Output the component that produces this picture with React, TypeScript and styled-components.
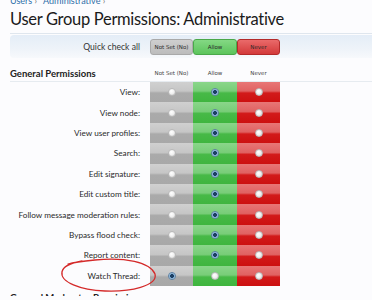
import React from "react";
import styled, { createGlobalStyle, css } from "styled-components";

const GlobalStyle = createGlobalStyle`
  html, body {
    margin: 0;
    padding: 0;
    background: #fcfcfe;
    overflow: hidden;
  }
  body {
    font-family: "Open Sans", "DejaVu Sans", sans-serif;
    color: #222;
  }
`;

const Page = styled.div`
  position: relative;
  width: 440px;
  height: 300px;
  margin-top: -4px;
  padding-left: 10px;
  box-sizing: border-box;
`;

const Breadcrumb = styled.div`
  display: flex;
  gap: 6px;
  height: 10px;
  font-family: "Lato", sans-serif;
  font-size: 9px;
  line-height: 10px;
  color: #2d6ea8;
`;

const Crumb = styled.span`
  &::after {
    content: " ›";
    color: #777;
  }
`;

const Title = styled.h1`
  margin: 0;
  padding: 3px 0 4px;
  font-family: "Lato", sans-serif;
  font-weight: 400;
  font-size: 16.5px;
  line-height: 20px;
  letter-spacing: -0.3px;
  color: #1a1a1a;
  border-bottom: 1px solid #dfe6ee;
`;

const COLS = "130px 10px 43px 44px 43px";

const QuickBar = styled.div`
  margin-top: 1px;
  height: 23px;
  display: grid;
  grid-template-columns: ${COLS};
  align-items: center;
  border-radius: 4px 0 0 4px;
  background: linear-gradient(to bottom, #e4edf7 0%, #eef3f9 60%, #f7f9fc 100%);
`;

const QuickLabel = styled.div`
  grid-column: 1;
  text-align: right;
  font-family: "Lato", sans-serif;
  font-size: 8.6px;
  color: #333;
  white-space: nowrap;
`;

type Kind = "none" | "allow" | "never";

const btnBg: Record<Kind, string> = {
  none: "linear-gradient(to bottom, #cfcfcf 0%, #bcbcbc 100%)",
  allow: "linear-gradient(to bottom, #84d884 0%, #5cc45c 100%)",
  never: "linear-gradient(to bottom, #ea6a6a 0%, #d33a3a 100%)",
};

const btnBorder: Record<Kind, string> = {
  none: "#a9a9a9",
  allow: "#4aa84a",
  never: "#b32a2a",
};

const QuickButton = styled.div<{ $kind: Kind }>`
  height: 16px;
  box-sizing: border-box;
  display: flex;
  align-items: center;
  justify-content: center;
  border: 1px solid ${(p) => btnBorder[p.$kind]};
  border-radius: 3px;
  background: ${(p) => btnBg[p.$kind]};
  font-family: "DejaVu Sans", sans-serif;
  font-size: 5.5px;
  color: #2a2a2a;
  white-space: nowrap;
`;

const SectionHead = styled.div`
  margin-top: 7px;
  height: 16px;
  display: grid;
  grid-template-columns: ${COLS};
  align-items: center;
  border-bottom: 1px solid #e6ebf0;
`;

const SectionTitle = styled.div`
  grid-column: 1 / span 2;
  font-family: "Lato", sans-serif;
  font-weight: 700;
  font-size: 9.5px;
  color: #222;
`;

const ColLabel = styled.div`
  text-align: center;
  font-family: "DejaVu Sans", sans-serif;
  font-size: 5.5px;
  color: #444;
  white-space: nowrap;
`;

const Row = styled.div`
  height: 20.4px;
  display: grid;
  grid-template-columns: ${COLS};
  align-items: stretch;
`;

const RowLabel = styled.div`
  grid-column: 1;
  display: flex;
  align-items: center;
  justify-content: flex-end;
  font-family: "Lato", sans-serif;
  font-size: 8.2px;
  color: #2a2a2a;
  white-space: nowrap;
`;

const cellBg: Record<Kind, string> = {
  none: "linear-gradient(to bottom, #d0d0d0 0%, #c6c6c6 45%, #aaaaaa 55%, #a8a8a8 100%)",
  allow: "linear-gradient(to bottom, #8ad68a 0%, #78cd78 45%, #47b947 55%, #3fb53f 100%)",
  never: "linear-gradient(to bottom, #e87676 0%, #e06262 45%, #d21a1a 55%, #cc1010 100%)",
};

const Cell = styled.div<{ $kind: Kind }>`
  display: flex;
  align-items: center;
  justify-content: center;
  background: ${(p) => cellBg[p.$kind]};
`;

const Radio = styled.span<{ $on: boolean }>`
  width: 8px;
  height: 8px;
  border-radius: 50%;
  box-sizing: border-box;
  ${(p) =>
    p.$on
      ? css`
          background: radial-gradient(circle at 50% 50%, #1d3f63 0%, #1d3f63 38%, #6fa3d0 50%, #d9e7f3 80%);
          border: 1px solid #5a7fa3;
        `
      : css`
          background: radial-gradient(circle at 40% 35%, #ffffff 0%, #f0f0f0 50%, #cfcfcf 100%);
          border: 1px solid #b9b9b9;
        `}
`;

const NextSection = styled.div`
  margin-top: 6px;
  font-family: "Lato", sans-serif;
  font-weight: 700;
  font-size: 9.5px;
  color: #222;
`;

const Scribble = styled.svg`
  position: absolute;
  left: 0;
  top: 4px;
  width: 372px;
  height: 300px;
  pointer-events: none;
`;

const rows: { label: string; value: Kind }[] = [
  { label: "View:", value: "allow" },
  { label: "View node:", value: "allow" },
  { label: "View user profiles:", value: "allow" },
  { label: "Search:", value: "allow" },
  { label: "Edit signature:", value: "allow" },
  { label: "Edit custom title:", value: "allow" },
  { label: "Follow message moderation rules:", value: "allow" },
  { label: "Bypass flood check:", value: "allow" },
  { label: "Report content:", value: "allow" },
  { label: "Watch Thread:", value: "none" },
];

const kinds: Kind[] = ["none", "allow", "never"];

export default function App() {
  return (
    <>
      <GlobalStyle />
      <Page>
        <Breadcrumb>
          <Crumb>Users</Crumb>
          <Crumb>Administrative</Crumb>
        </Breadcrumb>
        <Title>User Group Permissions: Administrative</Title>
        <QuickBar>
          <QuickLabel>Quick check all</QuickLabel>
          <span />
          <QuickButton $kind="none">Not Set (No)</QuickButton>
          <QuickButton $kind="allow">Allow</QuickButton>
          <QuickButton $kind="never">Never</QuickButton>
        </QuickBar>
        <SectionHead>
          <SectionTitle>General Permissions</SectionTitle>
          <ColLabel>Not Set (No)</ColLabel>
          <ColLabel>Allow</ColLabel>
          <ColLabel>Never</ColLabel>
        </SectionHead>
        {rows.map((r) => (
          <Row key={r.label}>
            <RowLabel>{r.label}</RowLabel>
            <span />
            {kinds.map((k) => (
              <Cell key={k} $kind={k}>
                <Radio $on={r.value === k} />
              </Cell>
            ))}
          </Row>
        ))}
        <NextSection>General Moderator Permissions</NextSection>
        <Scribble viewBox="0 0 372 300">
          <path
            d="M 68 264 C 75 262, 85 261, 95 260 C 125 257, 150 262, 155 274 C 158 286, 130 292, 105 291 C 80 290, 60 282, 62 272 C 63 266, 70 263, 82 261"
            fill="none"
            stroke="#d42a2a"
            strokeWidth="1.3"
            strokeLinecap="round"
          />
        </Scribble>
      </Page>
    </>
  );
}
